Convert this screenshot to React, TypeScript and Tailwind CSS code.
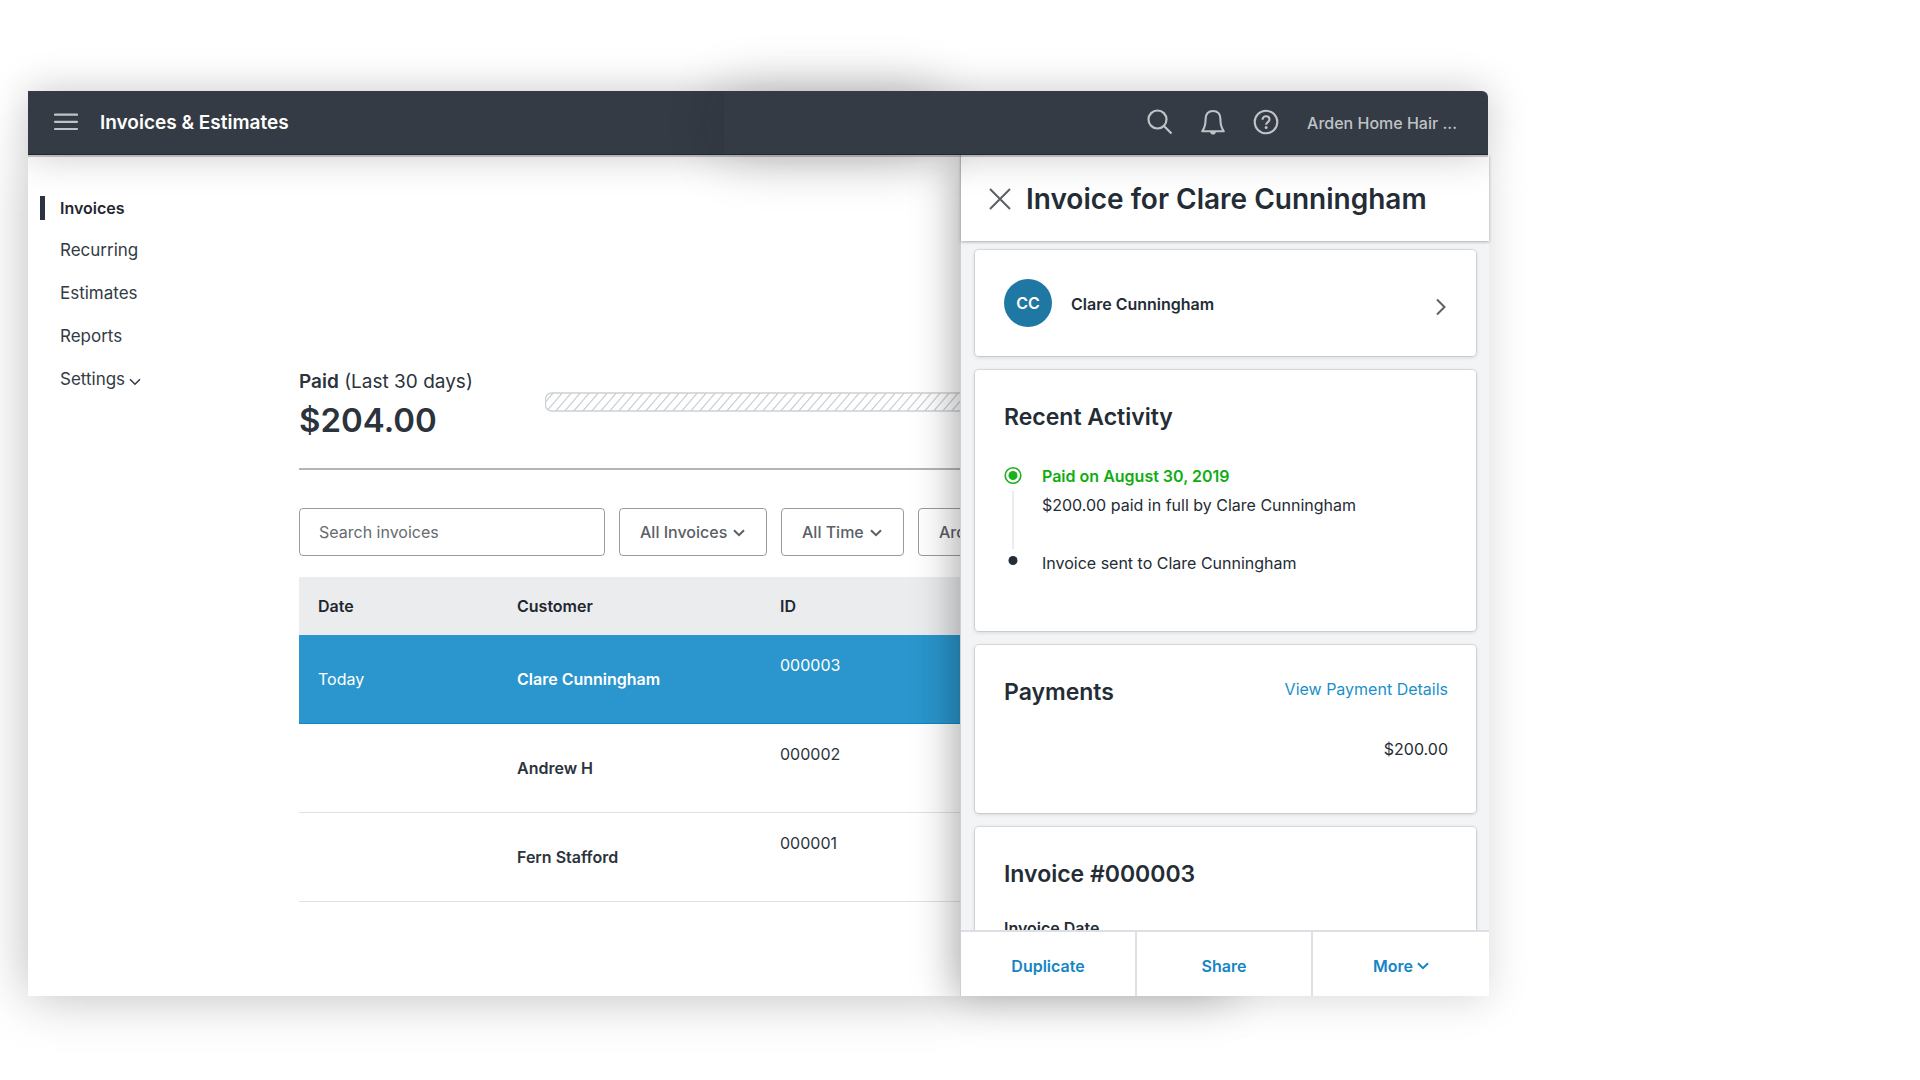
import React from 'react';

interface InvoiceRow {
  date: string;
  customer: string;
  id: string;
  selected?: boolean;
}

const navItems = ['Invoices', 'Recurring', 'Estimates', 'Reports', 'Settings'];

const filters = [
  { label: 'All Invoices', width: 'w-[148px]' },
  { label: 'All Time', width: 'w-[123px]' },
  { label: 'Arden Home Hair', width: 'w-[190px]' },
];

const invoices: InvoiceRow[] = [
  { date: 'Today', customer: 'Clare Cunningham', id: '000003', selected: true },
  { date: '', customer: 'Andrew H', id: '000002' },
  { date: '', customer: 'Fern Stafford', id: '000001' },
];

const ChevronDown = ({ className = '', strokeWidth = 2 }: { className?: string; strokeWidth?: number }) => (
  <svg className={className} width="12" height="8" viewBox="0 0 12 8" fill="none" stroke="currentColor" strokeWidth={strokeWidth}>
    <path d="M1 1.2 6 6.2 11 1.2" />
  </svg>
);

const Header = () => (
  <header className="relative z-20 mr-px flex h-16 rounded-tr-md shadow-[0_2px_0_rgba(0,0,0,0.2),0_0_40px_rgba(0,0,0,0.22)]">
    {/* Middle segment casts its own shadow onto the left one */}
    <div className="flex w-[696px] items-center bg-[#353b44] pl-[26px]">
      <button aria-label="Menu" className="pb-[2px] text-[#bfc3c7]">
        <svg width="24" height="18" viewBox="0 0 24 18" fill="none" stroke="currentColor" strokeWidth="2.2" strokeLinecap="round">
          <path d="M1 1.6h22M1 8.8h22M1 16h22" />
        </svg>
      </button>
      <h1 className="ml-[22px] text-[19px] font-semibold text-white">Invoices &amp; Estimates</h1>
    </div>
    <div className="absolute inset-y-0 left-[696px] w-[210px] shadow-[0_0_56px_rgba(20,20,30,0.24)]" />
    <div className="relative flex flex-1 items-center justify-end rounded-tr-md bg-[#353b44] pr-[31px] text-[#bfc3c7]">
      <div className="flex gap-[27px] pb-[2px]">
        <button aria-label="Search">
          <svg width="26" height="26" viewBox="0 0 26 26" fill="none" stroke="currentColor" strokeWidth="2.2">
            <circle cx="10.5" cy="10.5" r="9" />
            <path d="M17 17 24.5 24.5" />
          </svg>
        </button>
        <button aria-label="Notifications">
          <svg width="26" height="26" viewBox="0 0 26 26" fill="none" stroke="currentColor" strokeWidth="2.1" strokeLinejoin="round">
            <path d="M2.2 22.3c2.4-3.2 3.4-6.6 3.4-12.3C5.6 4.8 8.5 2 13 2s7.4 2.8 7.4 8c0 5.7 1 9.1 3.4 12.3Z" />
            <path d="M10 23h6c-.4 1.7-1.5 2.6-3 2.6S10.4 24.7 10 23Z" fill="currentColor" stroke="none" />
          </svg>
        </button>
        <button aria-label="Help">
          <svg width="26" height="26" viewBox="0 0 26 26" fill="none" stroke="currentColor" strokeWidth="2.1">
            <circle cx="13" cy="13" r="11.3" />
            <path d="M9.5 10.7C9.5 8.6 10.9 7.3 13 7.3s3.5 1.3 3.5 3.2c0 2.6-3.4 2.5-3.4 5.2" />
            <circle cx="13.1" cy="18.6" r="1.5" fill="currentColor" stroke="none" />
          </svg>
        </button>
      </div>
      <button className="ml-7 text-base font-medium">Arden Home Hair ...</button>
    </div>
    <div className="absolute inset-x-0 bottom-0 h-px bg-[#23272f]" />
  </header>
);

const Sidebar = () => (
  <nav className="w-[271px] shrink-0 pt-8">
    {navItems.map((item, index) => (
      <a
        key={item}
        href="#"
        className={`mb-px flex h-[42px] items-center pl-3 ${index === 0 ? 'text-base font-semibold text-[#1f2730]' : 'text-[17px] text-[#333b44]'}`}
      >
        <span className={`mr-[15px] h-6 w-[5px] ${index === 0 ? 'bg-[#2c353f]' : ''}`} />
        {item}
        {item === 'Settings' && <ChevronDown className="ml-1 mt-1" strokeWidth={1.6} />}
      </a>
    ))}
  </nav>
);

const InvoiceList = () => (
  <main className="min-w-0 flex-1 overflow-hidden pt-[213px] text-[#2b333c]">
    <div className="flex h-[100px] items-start">
      <div className="w-[246px] shrink-0">
        <p className="text-[19px] leading-7">
          <span className="font-semibold">Paid</span> (Last 30 days)
        </p>
        <p className="mt-1 text-[33px] leading-10 font-semibold">$204.00</p>
      </div>
      <svg className="mt-6 h-5 w-[600px] shrink-0">
        <defs>
          <pattern id="hatch" width="9" height="20" patternUnits="userSpaceOnUse">
            <path d="M-17 20 0 0M-8 20 9 0M1 20 18 0" stroke="#c8cdd1" strokeWidth="1.2" />
          </pattern>
        </defs>
        <rect x="0.5" y="1" width="640" height="18" rx="6" fill="url(#hatch)" stroke="#ccd1d5" strokeWidth="1.3" />
      </svg>
    </div>
    <hr className="w-[900px] border-t-2 border-[#b2b6ba]" />
    <div className="mt-[38px] flex gap-[14px] text-base">
      <input
        aria-label="Search invoices"
        placeholder="Search invoices"
        className="h-12 w-[306px] shrink-0 rounded border border-[#979ca2] px-[19px] outline-none placeholder:text-[#666b70]"
      />
      {filters.map((filter) => (
        <div key={filter.label} className={`relative h-12 shrink-0 ${filter.width}`}>
          <select
            aria-label={filter.label}
            className="h-full w-full appearance-none rounded border border-[#979ca2] bg-transparent pl-5 font-medium text-[#5b6066]"
          >
            <option>{filter.label}</option>
          </select>
          <ChevronDown className="pointer-events-none absolute top-[21px] right-[22px] text-[#5b6066]" />
        </div>
      ))}
    </div>
    <table className="mt-[21px] w-[900px] table-fixed border-separate border-spacing-0 text-left text-base">
      <thead>
        <tr className="h-[58px] bg-[#ebecee] text-[#1f2730]">
          <th className="w-[199px] pl-[19px] font-semibold">Date</th>
          <th className="w-[263px] pl-[19px] font-semibold">Customer</th>
          <th className="pl-[19px] font-semibold">ID</th>
        </tr>
      </thead>
      <tbody>
        {invoices.map((row) => (
          <tr
            key={row.id}
            className={`h-[89px] *:border-b *:pl-[19px] ${row.selected ? 'bg-[#2a96cd] text-white *:border-[#1486c4]' : '*:border-[#dfe2e5]'}`}
          >
            <td>{row.date}</td>
            <td className="font-semibold">{row.customer}</td>
            <td className="pt-[18px] align-top">{row.id}</td>
          </tr>
        ))}
      </tbody>
    </table>
  </main>
);

const Card = ({ className = '', children }: { className?: string; children: React.ReactNode }) => (
  <section className={`shrink-0 rounded bg-white pr-7 pl-[29px] shadow-[0_0_0_1px_rgba(0,0,0,0.08),0_1px_4px_rgba(0,0,0,0.16)] ${className}`}>
    {children}
  </section>
);

const InvoicePanel = () => (
  <aside className="relative z-10 w-[529px] shrink-0 shadow-[0_4px_38px_rgba(0,0,0,0.15)]">
    <div className="absolute inset-y-0 left-0 w-[270px] shadow-[0_0_46px_rgba(0,0,0,0.28)]" />
    <div className="relative flex h-full flex-col border-l border-[#ccd0d4] bg-[#f3f4f6] text-base text-[#242c35]">
      <div className="relative z-10 flex h-[86px] shrink-0 items-center bg-white pt-px pl-7 shadow-[0_1px_3px_rgba(0,0,0,0.3)]">
        <button aria-label="Close" className="text-[#5b6066]">
          <svg width="22" height="22" viewBox="0 0 22 22" fill="none" stroke="currentColor" strokeWidth="2">
            <path d="M1 1 21 21M21 1 1 21" />
          </svg>
        </button>
        <h2 className="ml-[15px] text-[28px] leading-9 font-semibold">Invoice for Clare Cunningham</h2>
      </div>
      <div className="flex min-h-0 flex-1 flex-col gap-[14px] overflow-hidden pt-[9px] pr-[13px] pl-[14px]">
        <Card className="flex h-[106px] items-center">
          <span className="flex h-12 w-12 items-center justify-center rounded-full bg-[#1f77a3] font-semibold text-white">CC</span>
          <span className="mt-[2px] ml-[19px] font-semibold">Clare Cunningham</span>
          <button aria-label="Open customer" className="mt-2 ml-auto text-[#5b6066]">
            <svg width="13" height="18" viewBox="0 0 13 18" fill="none" stroke="currentColor" strokeWidth="2">
              <path d="M2 1.5 9.5 9 2 16.5" />
            </svg>
          </button>
        </Card>
        <Card className="h-[261px] pt-[31px]">
          <h3 className="text-[23px] leading-8 font-semibold">Recent Activity</h3>
          <div className="mt-[29px] flex">
            <svg width="18" height="110" viewBox="0 0 18 110" fill="none">
              <circle cx="9" cy="13.5" r="7.8" stroke="#1db01d" strokeWidth="1.6" />
              <circle cx="9" cy="13.5" r="4.5" fill="#1db01d" />
              <path d="M9 29v58" stroke="#e4e6e8" strokeWidth="1.5" />
              <circle cx="9" cy="98.5" r="4.5" fill="#242c35" />
            </svg>
            <div className="ml-5 leading-[29px]">
              <p className="font-semibold text-[#12ac12]">Paid on August 30, 2019</p>
              <p>$200.00 paid in full by Clare Cunningham</p>
              <p className="mt-[29px]">Invoice sent to Clare Cunningham</p>
            </div>
          </div>
        </Card>
        <Card className="h-[168px] pt-[31px]">
          <div className="flex justify-between">
            <h3 className="text-[23px] leading-8 font-semibold">Payments</h3>
            <a href="#" className="leading-[26px] text-[#1b8fcb]">View Payment Details</a>
          </div>
          <p className="mt-7 text-right leading-[26px]">$200.00</p>
        </Card>
        <Card className="h-[230px] pt-[31px]">
          <h3 className="text-[23px] leading-8 font-semibold">Invoice #000003</h3>
          <p className="mt-6 leading-7 font-semibold">Invoice Date</p>
        </Card>
      </div>
      <div className="relative grid h-[66px] shrink-0 grid-cols-3 divide-x-2 divide-[#dcdfe3] border-t-2 border-[#dcdfe3] bg-white font-semibold text-[#1585c4] *:pt-[3px]">
        <button>Duplicate</button>
        <button>Share</button>
        <button className="flex items-center justify-center gap-1">
          More <ChevronDown />
        </button>
      </div>
    </div>
  </aside>
);

const App = () => {
  return (
    <div className="flex h-screen flex-col overflow-hidden bg-white pt-[91px] pr-[431px] pb-[84px] pl-7 font-['Inter','Liberation_Sans',sans-serif]">
      <Header />
      <div className="flex min-h-0 flex-1">
        <div className="flex min-w-0 flex-1 bg-white shadow-[0_0_50px_rgba(0,0,0,0.27)]">
          <Sidebar />
          <InvoiceList />
        </div>
        <InvoicePanel />
      </div>
    </div>
  );
};

export default App;
